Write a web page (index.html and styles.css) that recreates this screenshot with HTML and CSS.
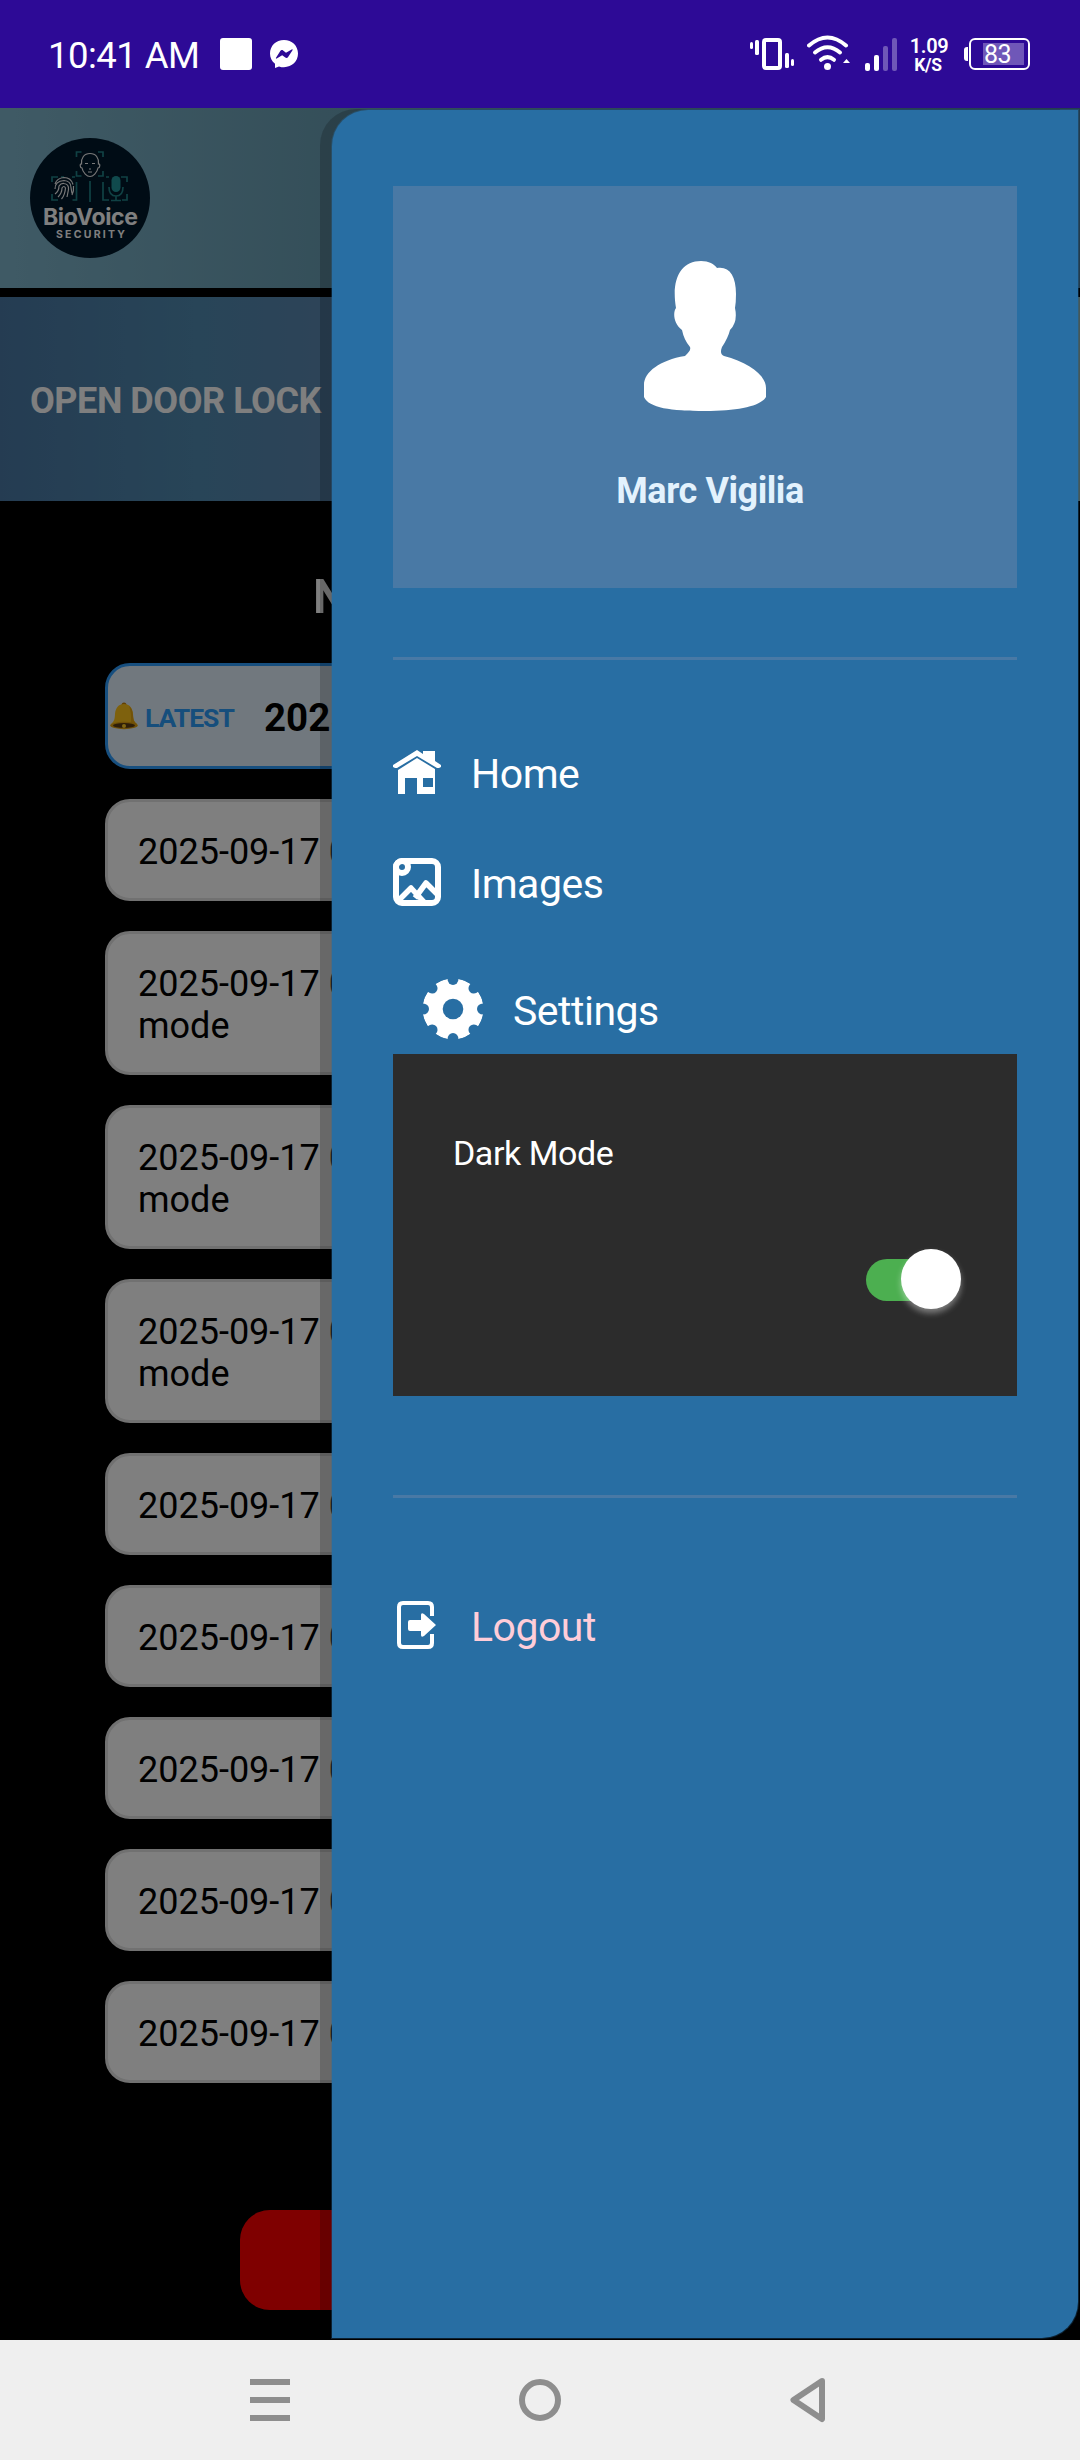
FILE: index.html
```html
<!DOCTYPE html>
<html lang="en">
<head>
<meta charset="utf-8">
<title>BioVoice Security</title>
<link rel="stylesheet" href="styles.css">
</head>
<body>
<header class="status">
  <span class="time">10:41 AM</span>
  <i class="square"></i>
  <svg class="messenger" viewBox="0 0 28 28" width="28" height="28"><path fill="#fff" d="M14 0C6 0 0 5.800 0 13.500c0 4.200 1.800 7.700 5 10.200V28l4-1.600c1.600.6 3.300.8 5 .8 8 0 14-5.800 14-13.600C28 5.800 22 0 14 0z"/><path fill="#2d0a96" d="M6 17.800 10.300 11c.6-1 1.900-1.200 2.800-.5l2.900 2.200 5.700-3.300c.6-.4 1.200.2.8.8l-4.400 6.800c-.6 1-1.900 1.200-2.800.5L12.200 15.300l-5.500 3.300c-.6.300-1.100-.2-.7-.8z"/></svg>
  <div class="indicators">
    <svg width="44" height="36" viewBox="0 0 44 36" class="vibrate"><g fill="#fff"><rect x="0" y="6" width="3" height="7" rx="1.500"/><rect x="5" y="4" width="4" height="15" rx="1.500"/><rect x="35" y="17" width="4" height="15" rx="1.500"/><rect x="41" y="23" width="3" height="7" rx="1.500"/></g><rect x="14" y="4" width="16" height="28" rx="2" fill="none" stroke="#fff" stroke-width="4"/></svg>
    <svg width="43" height="36" viewBox="0 0 43 36" class="wifi"><g fill="none" stroke="#fff" stroke-width="4" stroke-linecap="round"><path d="M2 10.500Q20.500-5.500 39 10.500"/><path d="M8 17.500Q20.500 7 33 17.500"/><path d="M14 24.800Q20.500 19.500 27 24.800"/></g><circle cx="20.500" cy="31.500" r="3.500" fill="#fff"/><path d="m36 28 3.500-4 3.500 4z" fill="#fff"/></svg>
    <svg width="33" height="33" viewBox="0 0 33 33" class="signal"><rect y="25" width="5" height="8" rx="2" fill="#fff"/><rect x="9" y="17" width="5" height="16" rx="2" fill="#fff"/><g fill="#6f57b8"><rect x="18" y="8" width="5" height="25" rx="2"/><rect x="27" y="0" width="5" height="33" rx="2"/></g></svg>
    <span class="speed"><b>1.09</b><b class="unit">K/S</b></span>
    <span class="battery"><i class="cap"></i><span class="cell"><span class="level">83</span></span></span>
  </div>
</header>

<main class="app">
  <div class="brandbar">
    <svg class="logo" width="120" height="120" viewBox="0 0 120 120">
      <circle cx="60" cy="60" r="60" fill="#00182a"/>
      <g fill="none" stroke="#208388" stroke-width="1.700">
        <path d="M46.500 19v-5h5M68 14h5v5M46.500 33v5h5M68 38h5v-5M22 44v-5h6M46.500 44v18h-4M22 56v6h6M73 44v18h6M91 39h6v5M97 56v6h-5M60 43v21M31 39h3M42 39h3M76 39h3"/>
        <path d="M79 49q0 9 7 9t7-9M86 58v4M81 62.500h10"/>
      </g>
      <rect x="81.500" y="38" width="9" height="16" rx="4.500" fill="#20959a"/>
      <g fill="none" stroke="#f2f2f2" stroke-width="1.200">
        <path d="M60 15.500c-6 0-9 4.500-8.500 10.500-2-.5-1.500 4 .5 4 1 5 5 8.500 8 8.500s7-3.500 8-8.500c2 0 2.500-4.500.5-4C69 20 66 15.500 60 15.500zM55 25.500h3M62 25.500h3M59 31h2M58 34h4"/>
        <path d="M25 46q2-6 9-6.500 7 0 9 7M25 51q0-8 9-8.500 7 .500 7 7l1 6M25 56q4-3 4-8 2-3 5-2.500 5 .5 4.500 6L37 59M28 59q4-4 4-9 2-3 3.500 0-.5 7-4 11M42 57q2-4 1.500-9"/>
      </g>
      <text x="13" y="87" class="logo-name" textLength="95">BioVoice</text>
      <text x="26" y="100" class="logo-sub" textLength="69">SECURITY</text>
    </svg>
  </div>
  <div class="doorbar">OPEN DOOR LOCK</div>
  <section class="feed">
    <h1>Notifications</h1>
    <article class="card latest">
      <svg class="bell" width="28" height="28" viewBox="0 0 28 28"><circle cx="14" cy="3" r="2.500" fill="#c78100"/><path fill="#fcc21b" d="M14 2c5.500 0 8.500 4 9 10 .3 6 1 7.500 4 10 1 1 1 2 0 2.500H1C0 24 0 23 1 22c3-2.500 3.700-4 4-10C5.500 6 8.500 2 14 2z"/><path fill="#e5a510" d="M19 4c3 2 3.500 5 4 9 .3 5 1 7 4 9-2 2-5 2-7 2 2-6 1-15-1-20z"/><ellipse cx="14" cy="23.500" rx="13.500" ry="3.700" fill="#e0a010"/><ellipse cx="14" cy="23.500" rx="11" ry="2.500" fill="#5c3d12"/><circle cx="14" cy="24" r="2" fill="#ffca28"/></svg>
      <span class="tag">LATEST</span><b class="stamp">2025-09-17</b>
    </article>
    <article class="card">2025-09-17 07:41</article>
    <article class="card">2025-09-17 07:38 <br>mode</article>
    <article class="card">2025-09-17 07:36 <br>mode</article>
    <article class="card">2025-09-17 07:35 <br>mode</article>
    <article class="card">2025-09-17 07:32</article>
    <article class="card">2025-09-17 07:30</article>
    <article class="card">2025-09-17 07:28</article>
    <article class="card">2025-09-17 07:25</article>
    <article class="card">2025-09-17 07:21</article>
    <div class="action"></div>
  </section>
  <div class="scrim"></div>
  <div class="drawer-shade"></div>
  <aside class="drawer">
    <div class="profile">
      <svg width="122" height="150" viewBox="0 0 122 150"><path fill="#fff" d="M57 0C65 0 70 3 73 7C85 5 92 14 92 33Q92 41 91 47Q94 61 86 69Q84 77 78 86C76 91 77 94 80 95C104 101 122 114 122 127V136C117 145 95 150 61 150C27 150 5 147 0 136V124C0 111 16 99 41 95C45 91 47 89 46 86Q40 79 38 69C29 62 29 51 32 47C27 18 37 0 57 0z"/></svg>
      <strong>Marc Vigilia</strong>
    </div>
    <hr>
    <nav class="menu">
      <a class="item home"><svg width="48" height="44" viewBox="0 0 48 44"><path fill="#fff" d="M24 0 30 4V1H42V11L48 15V17L46 18H44L24 6 4 18H2L0 17V15z"/><path fill="#fff" d="M5 20 24 8 42 19V44H24V28H12V44H5z"/><path fill="#286ea3" d="M30 28h10v9H30z"/></svg><span>Home</span></a>
      <a class="item images"><svg width="48" height="48" viewBox="0 0 48 48"><rect x="3" y="3" width="42" height="42" rx="6" fill="none" stroke="#fff" stroke-width="6"/><circle cx="9" cy="9" r="6" fill="none" stroke="#fff" stroke-width="6"/><path d="M4 44 18 30 31 44M22 40 33 25 46 38" fill="none" stroke="#fff" stroke-width="5.500" stroke-linejoin="round"/></svg><span>Images</span></a>
      <a class="item settings"><svg width="60" height="60" viewBox="-30 -30 60 60"><defs><mask id="teeth"><circle r="30.500" fill="#fff"/><circle r="10.300"/><g><ellipse id="notch" cy="-30" rx="5.500" ry="6"/><use href="#notch" transform="rotate(45)"/><use href="#notch" transform="rotate(90)"/><use href="#notch" transform="rotate(135)"/><use href="#notch" transform="rotate(180)"/><use href="#notch" transform="rotate(225)"/><use href="#notch" transform="rotate(270)"/><use href="#notch" transform="rotate(315)"/></g></mask></defs><circle r="30.500" fill="#fff" mask="url(#teeth)"/></svg><span>Settings</span></a>
    </nav>
    <div class="panel">
      <span>Dark Mode</span>
      <div class="toggle"><i></i></div>
    </div>
    <hr>
    <a class="item logout"><svg width="48" height="48" viewBox="0 0 48 48"><path fill="none" stroke="#fff" stroke-width="4" d="M39 15V6q0-4-4-4H10Q6 2 6 6v36q0 4 4 4h25q4 0 4-4V33"/><path fill="#fff" d="M17 19h11v-5q0-3 3-1l12 11-12 11q-3 2-3-1v-4H17q-2 0-2-2v-7q0-2 2-2z"/></svg><span>Logout</span></a>
  </aside>
</main>

<footer class="navbar">
  <svg width="42" height="48" viewBox="0 0 42 48"><path d="M1 3h40v6H1zM1 21h40v6H1zM1 39h40v6H1z" fill="#8e8e8e"/></svg>
  <svg width="42" height="48" viewBox="0 0 42 48"><circle cx="21" cy="24" r="18" fill="none" stroke="#8e8e8e" stroke-width="6"/></svg>
  <svg width="42" height="48" viewBox="0 0 42 48"><path d="M33 5 4.500 24 33 43z" fill="none" stroke="#8e8e8e" stroke-width="6" stroke-linejoin="round"/></svg>
</footer>
</body>
</html>
```
FILE: styles.css
```css
* { box-sizing: border-box; }
body { margin: 0; width: 1080px; height: 2460px; display: flex; flex-direction: column; font-family: Roboto, sans-serif; background: #000; overflow: hidden; }
svg { display: block; flex: none; }

.status { height: 108px; flex: none; background: #2d0a96; color: #fff; display: flex; align-items: center; padding-left: 48px; }
.time { font-size: 36.5px; line-height: 44px; width: 172px; margin-top: 4px; white-space: nowrap; letter-spacing: -.55px; }
.square { width: 32px; height: 32px; border-radius: 3px; background: #fff; margin-right: 18px; }
.indicators { display: flex; align-items: center; margin-left: auto; padding-right: 50px; }
.wifi { margin-left: 13px; margin-top: -2px; }
.signal { margin-left: 15px; }
.speed { display: flex; flex-direction: column; align-items: center; width: 38px; margin-left: 12px; margin-top: 4px; font-size: 20px; line-height: 19px; white-space: nowrap; }
.speed b { font-weight: 600; letter-spacing: -.3px; }
.speed .unit { font-size: 17.5px; font-weight: 700; padding-right: 2px; }
.battery { display: flex; align-items: center; margin-left: 16px; }
.cap { width: 4px; height: 14px; border-radius: 3px 0 0 3px; background: #fff; margin-right: 1px; }
.cell { width: 61px; height: 32px; border: 2px solid #fff; border-radius: 6px; padding: 3px 3px 3px 12px; display: flex; }
.level { background: #6f57b8; width: 41px; height: 22px; padding-left: 1px; font-size: 25px; line-height: 23px; letter-spacing: -.5px; }

.app { position: relative; height: 2232px; flex: none; background: #000; overflow: hidden; }
.brandbar { height: 180px; padding: 30px; background: linear-gradient(90deg, #7fb5cb, #6a9fb4 30%, #47789a); }
.logo-name { font: 700 23px Inter, sans-serif; fill: #fff; }
.logo-sub { font: 700 10.5px Inter, sans-serif; fill: #fff; }
.doorbar { height: 204px; margin-top: 9px; padding: 4px 0 0 30px; display: flex; align-items: center; font-size: 36px; font-weight: 700; letter-spacing: -.45px; color: #fff; background: linear-gradient(90deg, #4a79a5, #508ab0 18%, #5b88b0 30%, #8cb0b0); }
.feed { padding: 68px 105px 0; }
.feed h1 { margin: 0 0 38px; padding-left: 208px; height: 56px; font-size: 49px; line-height: 56px; color: #fff; }
.card { margin-bottom: 30px; padding: 29px 30px 25px 30px; border: 3px solid #e2e2e2; border-radius: 25px; background: #fff; color: #000; font-size: 36px; line-height: 42px; }
.latest { height: 106px; padding: 0 0 0 2px; display: flex; align-items: center; background: #e3f0fd; border-color: #2e9eff; }
.tag { width: 126px; padding: 3px 0 0 7px; font-size: 26.5px; font-weight: 700; letter-spacing: -1px; color: #2c9cf8; }
.stamp { font-size: 38.5px; padding-top: 3px; }
.action { width: 600px; height: 100px; margin: 127px 0 0 135px; border-radius: 30px; background: #f00; }
.scrim { position: absolute; inset: 0; background: rgba(0, 0, 0, .5); }
.drawer-shade { position: absolute; left: 320px; top: 1px; width: 740px; height: 2229px; border-radius: 36px 0 0 0; background: rgba(0, 0, 0, .18); }

.drawer { position: absolute; left: 332px; top: 2px; width: 746px; height: 2228px; padding: 76px 61px 0; border-radius: 36px 0 36px 0; background: #286ea3; color: #fff; box-shadow: 0 0 0 1px rgba(40, 110, 163, .3); display: flex; flex-direction: column; }
.profile { height: 402px; background: #4979a5; display: flex; flex-direction: column; align-items: center; padding-top: 75px; }
.profile strong { margin-top: 59px; padding-left: 10px; font-size: 36px; line-height: 42px; letter-spacing: -.45px; color: #e3f2fd; }
hr { width: 100%; height: 3px; margin: 69px 0 0; border: 0; flex: none; background: #4979a5; }
.item { display: flex; font-size: 41px; line-height: 50px; }
.item span { margin-left: 30px; padding-top: 1px; letter-spacing: -.5px; }
.menu { padding-top: 90px; }
.home span { margin-top: -2px; }
.home { height: 108px; }
.images { height: 121px; }
.settings { height: 75px; padding-left: 30px; }
.settings span { margin-top: 6px; }
.panel { height: 342px; padding: 79px 56px 0 60px; background: #2c2c2c; font-size: 34px; line-height: 40px; letter-spacing: -.45px; display: flex; flex-direction: column; }
.toggle { align-self: flex-end; display: flex; align-items: center; justify-content: flex-end; width: 95px; height: 42px; margin-top: 86px; border-radius: 21px; background: linear-gradient(90deg, #4caf50 70px, transparent 70px); }
.toggle i { width: 60px; height: 60px; flex: none; margin-top: -2px; border-radius: 50%; background: #fff; box-shadow: 0 4px 6px rgba(255, 255, 255, .4); }
.panel + hr { margin-top: 99px; }
.logout { margin-top: 103px; color: #ffcdd9; }

.navbar { height: 120px; flex: none; background: #efefef; display: flex; align-items: center; justify-content: center; gap: 228px; }
```
